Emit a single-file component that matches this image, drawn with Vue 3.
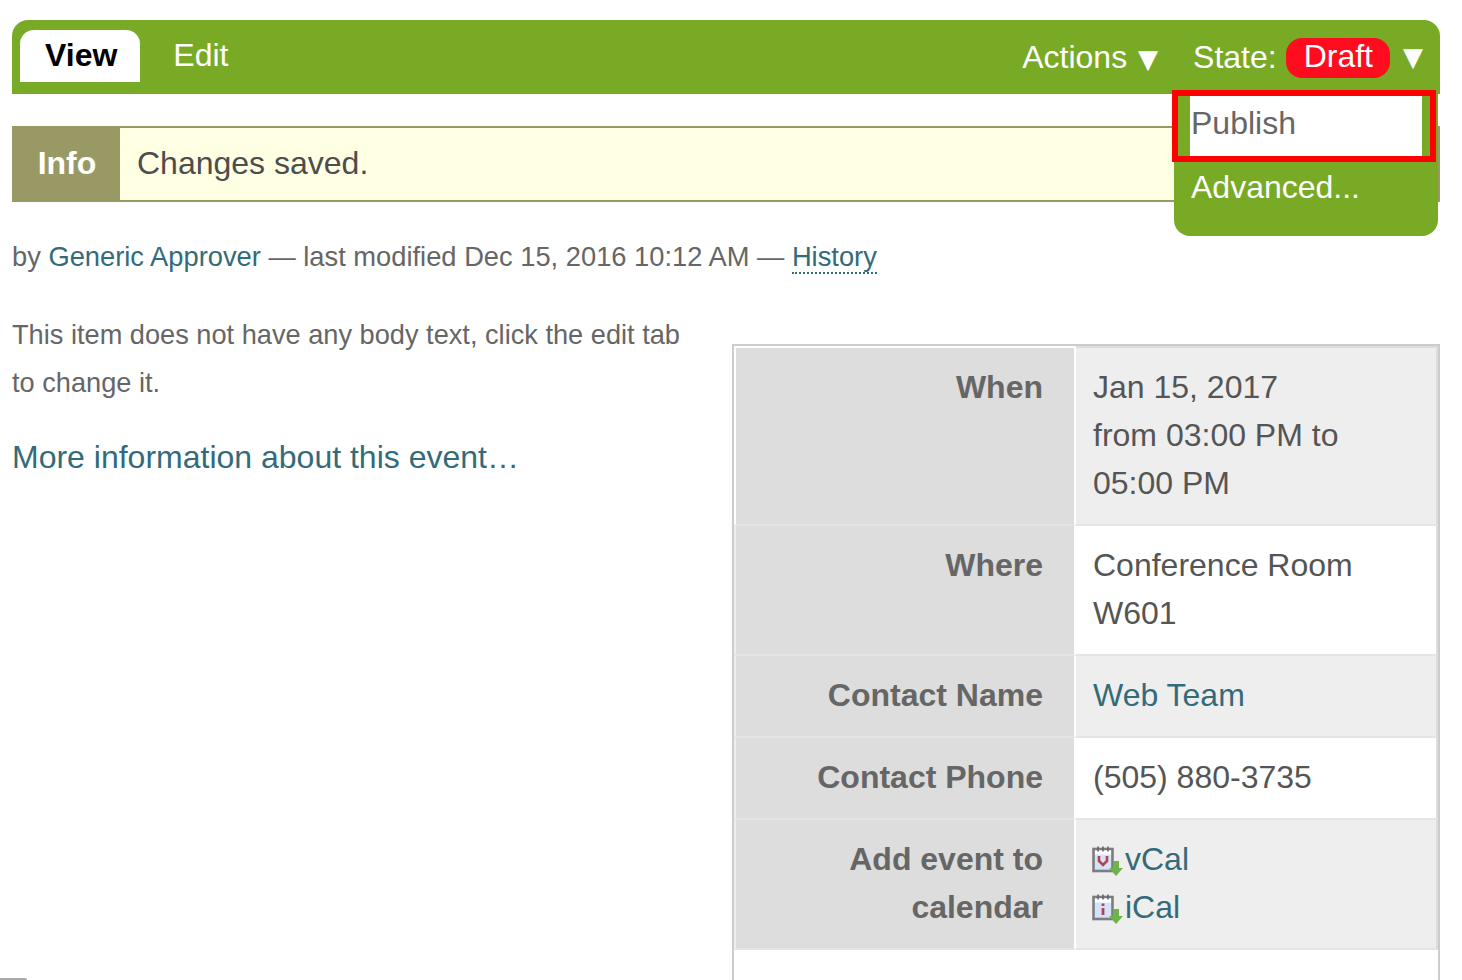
<template>
  <div class="page">
    <div class="edit-bar">
      <div class="tabs">
        <a class="tab active">View</a>
        <a class="tab">Edit</a>
      </div>
      <div class="menus">
        <span class="menu actions">Actions <span class="arrow">▼</span></span>
        <span class="menu state">
          State:
          <span class="draft">Draft</span>
          <span class="arrow">▼</span>
        </span>
      </div>
      <div class="dropdown">
        <a class="drop-item publish">Publish</a>
        <a class="drop-item">Advanced...</a>
        <div class="highlight"></div>
      </div>
    </div>

    <div class="message">
      <div class="message-label">Info</div>
      <div class="message-text">Changes saved.</div>
    </div>

    <p class="byline">
      by <a class="link">Generic Approver</a> — last modified Dec 15, 2016 10:12 AM —
      <a class="link history">History</a>
    </p>

    <div class="content">
      <div class="body-col">
        <p class="body-text">This item does not have any body text, click the edit tab to change it.</p>
        <a class="link more">More information about this event…</a>
      </div>
      <div class="details">
        <table>
          <tbody>
            <tr v-for="(row, i) in rows" :key="row.label" :class="{ odd: i % 2 === 0, first: i === 0 }">
              <th>{{ row.label }}</th>
              <td>
                <template v-if="row.lines">
                  <div v-for="line in row.lines" :key="line">{{ line }}</div>
                </template>
                <a v-else-if="row.link" class="link">{{ row.link }}</a>
                <template v-else>
                  <div v-for="cal in cals" :key="cal.name" class="cal-line">
                    <svg class="cal-icon" viewBox="0 0 32 32" width="32" height="32">
                      <rect x="1.5" y="4" width="19" height="22" fill="#d3e3f8" stroke="#7d7d7d" stroke-width="2.6" />
                      <rect x="3" y="5.5" width="16" height="4" fill="#fff" />
                      <path d="M6 1.5v5M11 1.5v5M16 1.5v5" stroke="#666" stroke-width="1.6" />
                      <path v-if="cal.name === 'vCal'" d="M7 11v5l4 4 4-4v-5" fill="none" stroke="#b4434f" stroke-width="2.6" />
                      <path v-else d="M11 10.5v2.5M11 15v7" fill="none" stroke="#b4434f" stroke-width="2.8" />
                      <path d="M21 16h6v7h4l-7 8-7-8h4z" fill="#6db34a" />
                    </svg><a class="link">{{ cal.name }}</a>
                  </div>
                </template>
              </td>
            </tr>
          </tbody>
        </table>
      </div>
    </div>
    <div class="corner-bar"></div>
  </div>
</template>

<script setup>
const rows = [
  { label: 'When', lines: ['Jan 15, 2017', 'from 03:00 PM to', '05:00 PM'] },
  { label: 'Where', lines: ['Conference Room', 'W601'] },
  { label: 'Contact Name', link: 'Web Team' },
  { label: 'Contact Phone', lines: ['(505) 880-3735'] },
  { label: 'Add event to calendar' }
]

const cals = [{ name: 'vCal' }, { name: 'iCal' }]
</script>

<style>
html,
body {
  margin: 0;
  background: #fff;
  overflow: hidden;
}
</style>

<style scoped>
.page {
  height: 980px;
  box-sizing: border-box;
  padding: 20px 22px 0 12px;
  overflow: hidden;
  position: relative;
  font-family: "Liberation Sans", Arial, sans-serif;
  font-size: 32px;
  color: #555;
}

.edit-bar {
  position: relative;
  height: 74px;
  background: #78aa25;
  border-radius: 16px 16px 0 0;
  display: flex;
  justify-content: space-between;
  color: #fff;
}

.tabs {
  display: flex;
  padding: 10px 0 0 8px;
}

.tab {
  height: 52px;
  line-height: 50px;
  padding: 0 25px;
  margin-right: 8px;
}

.tab.active {
  background: #fff;
  color: #000;
  font-weight: bold;
  padding-right: 23px;
  border-radius: 14px 14px 0 0;
}

.menus {
  display: flex;
  align-items: center;
  gap: 35px;
  padding: 0 17px 0 0;
  height: 74px;
}

.menu {
  white-space: nowrap;
}

.actions .arrow {
  margin-left: 2px;
}

.state {
  display: flex;
  align-items: center;
  gap: 9px;
}

.arrow {
  font-family: "DejaVu Sans", sans-serif;
  font-size: 26px;
}

.draft {
  background: #ff0d1f;
  border-radius: 16px;
  height: 40px;
  line-height: 36px;
  padding: 0 17px 0 18px;
  margin: 2px 4px 0 0;
}

.dropdown {
  position: absolute;
  top: 74px;
  right: 2px;
  width: 264px;
  height: 142px;
  box-sizing: border-box;
  padding-top: 2px;
  background: #78aa25;
  border-radius: 0 0 16px 16px;
  z-index: 2;
}

.drop-item {
  display: block;
  height: 60px;
  line-height: 62px;
  margin: 0 16px;
  padding-left: 1px;
}

.publish {
  background: #fff;
  color: #666;
  line-height: 54px;
}

.highlight {
  position: absolute;
  top: -4px;
  left: -2px;
  width: 264px;
  height: 72px;
  box-sizing: border-box;
  border: 6px solid #ff0000;
}

.message {
  display: flex;
  height: 76px;
  box-sizing: border-box;
  margin-top: 32px;
  border: 2px solid #999966;
  border-left: none;
  background: #ffffe3;
}

.message-label {
  width: 106px;
  padding-left: 2px;
  margin: -2px 0;
  background: #999966;
  color: #fff;
  font-weight: bold;
  text-align: center;
  line-height: 74px;
}

.message-text {
  padding-left: 17px;
  line-height: 70px;
  color: #4d4d4d;
}

.byline {
  margin: 31px 0 0;
  font-size: 27.3px;
  line-height: 48px;
  color: #666;
}

.link {
  color: #336b7a;
}

.history {
  border-bottom: 2px dotted #336b7a;
}

.content {
  display: flex;
  justify-content: space-between;
  margin-top: 30px;
}

.body-col {
  width: 680px;
}

.body-text {
  margin: 0 0 2px;
  font-size: 27.2px;
  line-height: 48px;
  color: #666;
}

.more {
  display: block;
  line-height: 48px;
  margin-top: 26px;
}

.details {
  width: 708px;
  height: 660px;
  margin-top: 33px;
  box-sizing: border-box;
  border: 2px solid #ccc;
  border-bottom: none;
}

table {
  width: 704px;
  table-layout: fixed;
  border-collapse: separate;
  border-spacing: 0;
  line-height: 48px;
}

th,
td {
  padding: 15px 0 17px;
  vertical-align: top;
  box-sizing: border-box;
  border-bottom: 2px solid #e4e4e4;
}

th {
  width: 342px;
  padding-right: 31px;
  text-align: right;
  font-weight: bold;
  color: #666;
  background: #ddd;
  border-left: 2px solid #eee;
  border-right: 2px solid #fff;
}

td {
  padding-left: 17px;
  background: #fff;
  border-right: 2px solid #ddd;
}

tr.odd td {
  background: #eee;
}

tr.first th {
  border-top: 2px solid #fff;
  border-left-color: #fff;
}

tr.first td {
  border-top: 2px solid #ddd;
}

.cal-line {
  display: flex;
  align-items: center;
  height: 48px;
}

.cal-icon {
  flex: none;
  margin-top: 3px;
  margin-left: -1px;
  margin-right: 1px;
}

.corner-bar {
  position: absolute;
  left: 0;
  bottom: 0;
  width: 27px;
  height: 2px;
  background: #aaa;
  border-radius: 0 2px 0 0;
}
</style>
